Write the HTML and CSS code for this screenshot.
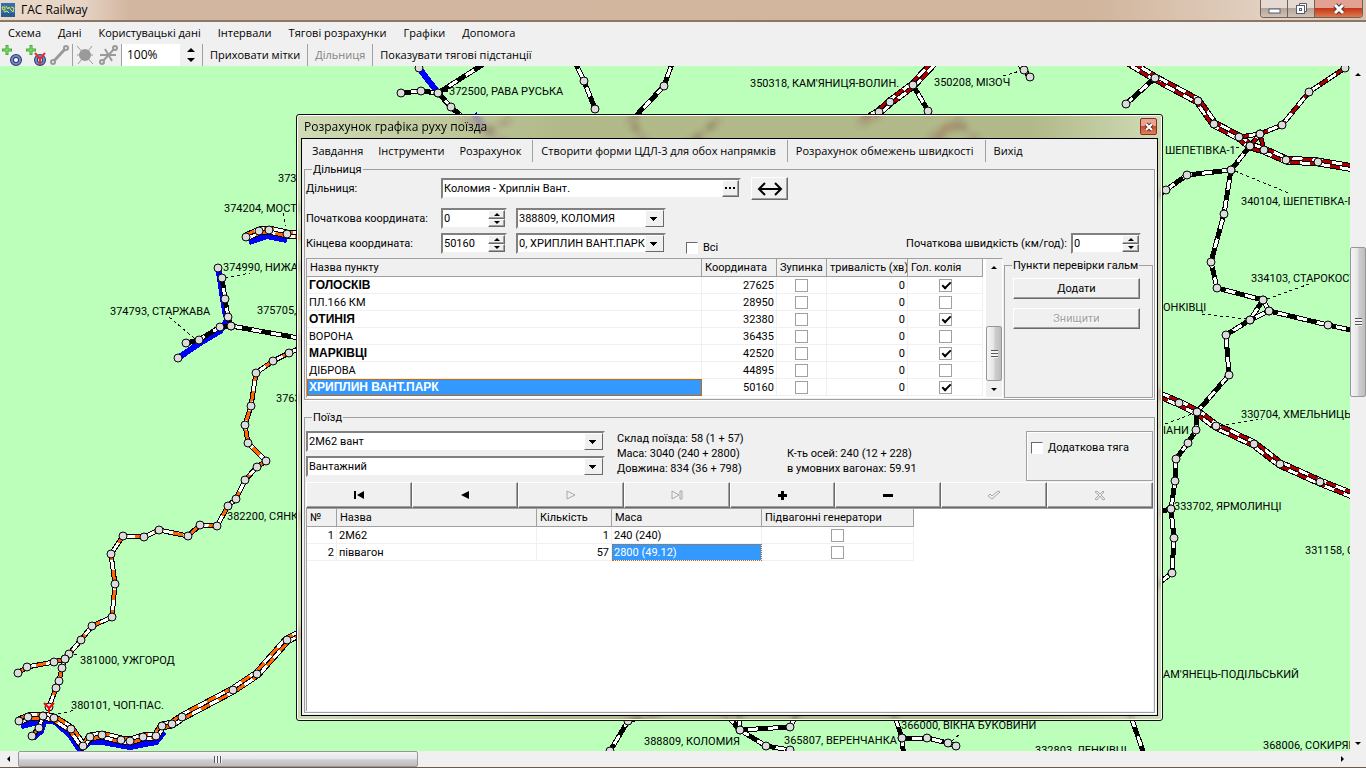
FILE: index.html
```html
<!DOCTYPE html>
<html lang="uk">
<head>
    <meta charset="UTF-8">
    <meta name="viewport" content="width=device-width, initial-scale=1.0">
    <title>ГАС Railway</title>
    <link rel="stylesheet" href="styles.css">
</head>
<body>
    <header class="titlebar">
        <svg class="app-icon" width="14" height="14" viewBox="0 0 14 14">
            <rect width="14" height="14" fill="#2f6fb4"/>
            <path d="M0 10h14v4H0z" fill="#2a5a94"/>
            <path d="M1 4h3v3H2zM5 3l2 3 1-2 2 3M10 4l3 1-1 4-2-2M3 9l3-1 2 2" fill="none" stroke="#e6e82e"/>
        </svg>
        <h1>ГАС Railway</h1>
        <div class="win-buttons">
            <button class="win-btn" aria-label="Згорнути"><svg width="13" height="16" viewBox="0 0 13 16"><rect x="1" y="8" width="11" height="4" fill="#fff" stroke="#555c70"/></svg></button>
            <button class="win-btn" aria-label="Відновити"><svg width="13" height="16" viewBox="0 0 13 16"><path d="M4.500 2.500h7v8h-2v-6h-5z" fill="#fff" stroke="#555c70"/><rect x="1.500" y="4.500" width="8" height="8" fill="#fff" stroke="#555c70"/><rect x="4.500" y="7.500" width="2" height="2" fill="none" stroke="#555c70"/></svg></button>
            <button class="win-btn win-close" aria-label="Закрити"><svg width="14" height="16" viewBox="0 0 14 16"><path d="M3 4l8 8M11 4l-8 8" stroke="#53353a" stroke-width="5"/><path d="M3 4l8 8M11 4l-8 8" stroke="#fff" stroke-width="3"/></svg></button>
        </div>
    </header>

    <nav class="menu main-menu">
        <a href="#">Схема</a>
        <a href="#">Дані</a>
        <a href="#">Користувацькі дані</a>
        <a href="#">Інтервали</a>
        <a href="#">Тягові розрахунки</a>
        <a href="#">Графіки</a>
        <a href="#">Допомога</a>
    </nav>

    <div class="toolbar">
        <button class="tool" aria-label="Додати пункт">
            <svg width="22" height="22" viewBox="0 0 22 22"><path d="M6 1v10M1 6h10" stroke="#3fae35" stroke-width="3"/><path d="M6 2v8M2 6h8" stroke="#8be37c"/><circle cx="15" cy="16" r="4" fill="#fff" stroke="#26386f" stroke-width="4"/><circle cx="15" cy="16" r="4" fill="none" stroke="#7488c8" stroke-width="2"/></svg>
        </button>
        <button class="tool" aria-label="Додати підстанцію">
            <svg width="22" height="22" viewBox="0 0 22 22"><path d="M6 1v10M1 6h10" stroke="#3fae35" stroke-width="3"/><path d="M6 2v8M2 6h8" stroke="#8be37c"/><circle cx="15" cy="16" r="4" fill="#fff" stroke="#26386f" stroke-width="4"/><circle cx="15" cy="16" r="4" fill="none" stroke="#7488c8" stroke-width="2"/><path d="M10 9l5 6 5-6M15 15v6" fill="none" stroke="#e03030" stroke-width="2"/></svg>
        </button>
        <button class="tool" aria-label="Додати перегін">
            <svg width="22" height="22" viewBox="0 0 22 22"><path d="M4 18L17 4" stroke="#9a9a9a" stroke-width="3"/><circle cx="4" cy="18" r="2" fill="#eee" stroke="#9a9a9a" stroke-width="2"/><circle cx="17" cy="4" r="2" fill="#eee" stroke="#9a9a9a" stroke-width="2"/></svg>
        </button>
        <span class="sep"></span>
        <button class="tool" aria-label="Видалити пункт" disabled>
            <svg width="22" height="22" viewBox="0 0 22 22"><circle cx="11" cy="11" r="6" fill="#9a9a9a"/><path d="M3 2l16 18M18 2L4 20M3 11h16" stroke="#9a9a9a"/></svg>
        </button>
        <button class="tool" aria-label="Видалити перегін" disabled>
            <svg width="22" height="22" viewBox="0 0 22 22"><path d="M4 18L17 4M7 5l7 12M2 11h16" stroke="#9a9a9a" stroke-width="2"/><circle cx="4" cy="18" r="2" fill="#eee" stroke="#9a9a9a" stroke-width="2"/><circle cx="17" cy="4" r="2" fill="#eee" stroke="#9a9a9a" stroke-width="2"/></svg>
        </button>
        <span class="sep"></span>
        <div class="zoom">
            <input type="text" value="100%" aria-label="Масштаб">
            <div class="zoom-arrows">
                <button class="arrow up" aria-label="Збільшити"></button>
                <button class="arrow down" aria-label="Зменшити"></button>
            </div>
        </div>
        <span class="sep"></span>
        <button class="text-tool">Приховати мітки</button>
        <span class="sep"></span>
        <button class="text-tool" disabled>Дільниця</button>
        <span class="sep"></span>
        <button class="text-tool">Показувати тягові підстанції</button>
    </div>

    <main class="workspace">
        <svg class="map" id="map"></svg>
        <div class="scroll vertical">
            <button class="arrow up" aria-label="Вгору"></button>
            <div class="track"><div class="thumb"></div></div>
            <button class="arrow down" aria-label="Вниз"></button>
        </div>
        <div class="scroll horizontal">
            <button class="arrow left" aria-label="Ліворуч"></button>
            <div class="track"><div class="thumb"></div></div>
            <button class="arrow right" aria-label="Праворуч"></button>
        </div>
        <div class="corner"></div>
    </main>

    <section class="dialog" role="dialog" aria-labelledby="dialogTitle">
        <div class="dialog-title">
            <h2 id="dialogTitle">Розрахунок графіка руху поїзда</h2>
            <button class="dialog-close" aria-label="Закрити"><svg width="10" height="10" viewBox="0 0 10 10"><path d="M2 2l6 6M8 2l-6 6" stroke="#5a3434" stroke-width="4"/><path d="M2 2l6 6M8 2l-6 6" stroke="#fff" stroke-width="2"/></svg></button>
        </div>
        <div class="dialog-body">
            <nav class="menu dialog-menu">
                <a href="#">Завдання</a>
                <a href="#">Інструменти</a>
                <a href="#">Розрахунок</a>
                <span class="sep"></span>
                <a href="#">Створити форми ЦДЛ-3 для обох напрямків</a>
                <span class="sep"></span>
                <a href="#">Розрахунок обмежень швидкості</a>
                <span class="sep"></span>
                <a href="#">Вихід</a>
            </nav>

            <fieldset class="section">
                <legend>Дільниця</legend>
                <div class="row row-section">
                    <label for="section">Дільниця:</label>
                    <div class="field wide">
                        <input type="text" id="section" value="Коломия - Хриплін Вант.">
                        <button class="bevel more" aria-label="Вибрати дільницю"><svg width="11" height="3" viewBox="0 0 11 3"><path d="M0 0h2v2H0zM4 0h2v2H4zM8 0h2v2H8z"/></svg></button>
                    </div>
                    <button class="bevel swap" aria-label="Змінити напрямок"><svg width="26" height="14" viewBox="0 0 26 14"><path d="M2 7h22M8 1L2 7l6 6M18 1l6 6-6 6" fill="none" stroke="#000" stroke-width="2"/></svg></button>
                </div>
                <div class="row">
                    <label for="startCoord">Початкова координата:</label>
                    <div class="field spin">
                        <input type="number" id="startCoord" value="0">
                        <div class="spin-buttons"><button class="arrow up" aria-label="Більше"></button><button class="arrow down" aria-label="Менше"></button></div>
                    </div>
                    <div class="field combo station">
                        <select aria-label="Початковий пункт"><option>388809, КОЛОМИЯ</option></select>
                    </div>
                </div>
                <div class="row">
                    <label for="endCoord">Кінцева координата:</label>
                    <div class="field spin">
                        <input type="number" id="endCoord" value="50160">
                        <div class="spin-buttons"><button class="arrow up" aria-label="Більше"></button><button class="arrow down" aria-label="Менше"></button></div>
                    </div>
                    <div class="field combo station">
                        <select aria-label="Кінцевий пункт"><option>0, ХРИПЛИН ВАНТ.ПАРК</option></select>
                    </div>
                    <label class="check all"><input type="checkbox"> Всі</label>
                    <label class="speed-label" for="startSpeed">Початкова швидкість (км/год):</label>
                    <div class="field spin">
                        <input type="number" id="startSpeed" value="0">
                        <div class="spin-buttons"><button class="arrow up" aria-label="Більше"></button><button class="arrow down" aria-label="Менше"></button></div>
                    </div>
                </div>

                <div class="points">
                    <div class="grid-box">
                        <table class="grid">
                            <colgroup><col><col class="w75"><col class="w50"><col class="w81"><col class="w75"></colgroup>
                            <thead>
                                <tr><th>Назва пункту</th><th>Координата</th><th>Зупинка</th><th>тривалість (хв)</th><th>Гол. колія</th></tr>
                            </thead>
                            <tbody id="points"></tbody>
                        </table>
                        <div class="scroll vertical">
                            <button class="arrow up" aria-label="Вгору"></button>
                            <div class="track"><div class="thumb"></div></div>
                            <button class="arrow down" aria-label="Вниз"></button>
                        </div>
                    </div>
                    <fieldset class="brakes">
                        <legend>Пункти перевірки гальм</legend>
                        <button class="bevel">Додати</button>
                        <button class="bevel" disabled>Знищити</button>
                    </fieldset>
                </div>
            </fieldset>

            <fieldset class="train">
                <legend>Поїзд</legend>
                <div class="train-info">
                    <div class="train-selects">
                        <div class="field combo"><select aria-label="Поїзд"><option>2М62 вант</option></select></div>
                        <div class="field combo"><select aria-label="Тип поїзда"><option>Вантажний</option></select></div>
                    </div>
                    <div class="facts">
                        <p>Склад поїзда: 58 (1 + 57)</p>
                        <p>Маса: 3040 (240 + 2800)</p>
                        <p>Довжина: 834 (36 + 798)</p>
                    </div>
                    <div class="facts second">
                        <p>К-ть осей: 240 (12 + 228)</p>
                        <p>в умовних вагонах: 59.91</p>
                    </div>
                    <div class="extra">
                        <label class="check"><input type="checkbox"> Додаткова тяга</label>
                    </div>
                </div>
                <div class="navigator">
                    <button class="bevel" aria-label="Перший"><svg width="12" height="10" viewBox="0 0 12 10"><path d="M1 1h2v8H1zM11 1v8L4 5z"/></svg></button>
                    <button class="bevel" aria-label="Попередній"><svg width="12" height="10" viewBox="0 0 12 10"><path d="M10 1v8L2 5z"/></svg></button>
                    <button class="bevel" aria-label="Наступний" disabled><svg width="12" height="10" viewBox="0 0 12 10"><path d="M2 1v8l8-4z"/></svg></button>
                    <button class="bevel" aria-label="Останній" disabled><svg width="12" height="10" viewBox="0 0 12 10"><path d="M1 1v8l7-4zM9 1h2v8H9z"/></svg></button>
                    <button class="bevel" aria-label="Додати"><svg width="12" height="10" viewBox="0 0 12 10"><path d="M5 1h3v3h3v3H8v3H5V7H2V4h3z"/></svg></button>
                    <button class="bevel" aria-label="Видалити"><svg width="12" height="10" viewBox="0 0 12 10"><path d="M1 4h10v3H1z"/></svg></button>
                    <button class="bevel" aria-label="Зберегти" disabled><svg width="13" height="10" viewBox="0 0 13 10"><path d="M0 6l2-2 2 2 6-5 2 1-8 7z"/></svg></button>
                    <button class="bevel" aria-label="Скасувати" disabled><svg width="12" height="11" viewBox="0 0 12 11"><path d="M1 2l2-1 3 3 3-3 1 1-3 3 4 4-2 1-3-4-3 4-2-1 4-4z"/></svg></button>
                </div>
                <div class="cars-box">
                    <table class="grid cars">
                        <colgroup><col class="w30"><col class="w200"><col class="w75"><col class="w150"><col class="w152"></colgroup>
                        <thead>
                            <tr><th>№</th><th>Назва</th><th>Кількість</th><th>Маса</th><th>Підвагонні генератори</th></tr>
                        </thead>
                        <tbody>
                            <tr><td class="num">1</td><td>2М62</td><td class="num">1</td><td>240 (240)</td><td class="tick"><input type="checkbox" aria-label="Генератор 2М62"></td></tr>
                            <tr><td class="num">2</td><td>піввагон</td><td class="num">57</td><td class="selected dotted">2800 (49.12)</td><td class="tick"><input type="checkbox" aria-label="Генератор піввагон"></td></tr>
                        </tbody>
                    </table>
                </div>
            </fieldset>
        </div>
    </section>

    <script>
        const points = [
            ["ГОЛОСКІВ", 27625, true],
            ["ПЛ.166 КМ", 28950, false],
            ["ОТИНІЯ", 32380, true],
            ["ВОРОНА", 36435, false],
            ["МАРКІВЦІ", 42520, true],
            ["ДІБРОВА", 44895, false],
            ["ХРИПЛИН ВАНТ.ПАРК", 50160, true]
        ];

        document.getElementById("points").innerHTML = points.map(([name, coord, main], i) => `
            <tr>
                <td class="${main ? "main" : ""} ${i === points.length - 1 ? "selected" : ""}">${name}</td>
                <td class="num">${coord}</td>
                <td class="tick"><input type="checkbox" aria-label="Зупинка ${name}"></td>
                <td class="num">0</td>
                <td class="tick"><input type="checkbox" aria-label="Головна колія ${name}" ${main ? "checked" : ""}></td>
            </tr>`).join("");

        // blue siding lines, drawn under the tracks
        const blueLines = [
            [[249,242],[267,236],[287,240]],
            [[218,268],[220,278],[223,299],[226,317]],
            [[228,319],[220,331],[200,343],[178,358]],
            [[21,726],[43,721],[54,721],[70,735],[80,750],[90,742],[102,742],[130,747],[156,742],[164,732]],
            [[33,738],[41,731],[46,716]],
            [[419,68],[438,93]],
            [[474,114],[486,132]]
        ];

        // single tracks: colour, points
        const singles = [
            ["black", [[222,278],[225,299],[228,317],[231,326]]],
            ["black", [[186,343],[199,340],[220,327],[231,326],[310,340]]],
            ["orange", [[310,344],[289,353],[273,361],[256,373],[251,406],[245,425],[248,443],[266,461],[257,467],[245,480],[236,499],[228,506],[217,526],[200,525],[188,536],[159,530],[144,537],[123,536],[111,554],[115,584],[112,617],[92,626],[81,640],[69,654],[65,659],[62,668],[59,681],[56,688],[49,707]]],
            ["orange", [[18,673],[27,667],[54,662],[65,659]]],
            ["orange", [[32,736],[39,728],[43,716]]],
            ["black", [[401,93],[421,91],[438,93],[490,60]]],
            ["black", [[438,93],[451,107],[470,124]]],
            ["black", [[484,130],[505,142]]],
            ["black", [[484,132],[508,121]]],
            ["black", [[574,60],[584,81],[595,109]]],
            ["black", [[674,58],[664,86],[632,120]]],
            ["black", [[632,122],[646,144]]],
            ["black", [[716,122],[692,142]]],
            ["black", [[913,85],[928,111]]],
            ["black", [[958,122],[976,140]]],
            ["black", [[1014,58],[1024,70],[1030,77]]],
            ["black", [[1155,78],[1126,104]]],
            ["red", [[1239,137],[1260,134],[1282,125],[1309,92],[1345,68]]],
            ["red", [[1250,146],[1260,134],[1264,150]]],
            ["black", [[1250,146],[1231,170],[1187,175],[1166,190],[1150,202]]],
            ["black", [[1231,170],[1224,214],[1211,262],[1217,288],[1263,300],[1269,311],[1328,325],[1360,332]]],
            ["black", [[1263,300],[1250,320],[1269,311]]],
            ["black", [[1250,320],[1226,335],[1229,375],[1197,412],[1196,430],[1188,443],[1176,459],[1175,481],[1171,509],[1174,538],[1172,573],[1150,590]]],
            ["black", [[1171,509],[1150,514]]],
            ["black", [[660,712],[628,721],[610,751]]],
            ["black", [[720,708],[740,730],[766,746],[790,750]]],
            ["black", [[739,708],[740,730],[790,727],[800,708]]],
            ["black", [[892,708],[902,738],[904,760]]],
            ["black", [[902,738],[927,738],[948,743],[956,746]]],
            ["black", [[1128,708],[1146,760]]]
        ];

        // double tracks: colour, points
        const doubles = [
            ["orange", [[246,237],[259,231],[269,230],[287,234],[310,236]]],
            ["orange", [[19,721],[28,717],[43,716],[54,718],[71,729],[83,746],[90,737],[102,735],[121,740],[130,741],[143,737],[156,736],[162,726],[172,724],[182,717],[233,690],[257,674],[287,640],[310,628]]],
            ["red", [[940,56],[913,85],[890,102],[879,112],[862,122]]],
            ["red", [[960,122],[932,138]]],
            ["red", [[1115,54],[1155,78],[1198,101],[1214,124],[1239,137],[1250,146],[1264,150],[1286,160],[1318,162],[1360,169]]],
            ["red", [[1150,391],[1179,403],[1197,412],[1216,426],[1254,444],[1280,464],[1320,482],[1360,498]]]
        ];

        const leaders = [
            [283,213,286,226], [225,278,250,273], [169,317,194,338], [68,653,77,655],
            [58,714,76,710], [440,94,450,90], [1003,76,1020,71], [1236,148,1242,147],
            [1235,171,1291,194], [1267,299,1312,283], [1202,314,1247,319], [1160,426,1192,414],
            [1220,426,1262,419], [952,741,961,733]
        ];

        const labels = [
            [449,95,"372500, РАВА РУСЬКА"], [750,87,"350318, КАМ'ЯНИЦЯ-ВОЛИН."], [934,86,"350208, МІЗОЧ"],
            [1165,154,"ШЕПЕТІВКА-1"], [1241,205,"340104, ШЕПЕТІВКА-ПОД."], [1251,282,"334103, СТАРОКОСТЯНТИНІВ"],
            [1163,311,"ОНКІВЦІ"], [1241,418,"330704, ХМЕЛЬНИЦЬКИЙ"], [1163,434,"ІАНИ"],
            [1174,510,"333702, ЯРМОЛИНЦІ"], [1305,554,"331158, СЛОБІДКА"], [1163,678,"АМ'ЯНЕЦЬ-ПОДІЛЬСЬКИЙ"],
            [1263,749,"368006, СОКИРЯНИ"], [1035,754,"332803, ЛЕНКІВЦІ"], [901,729,"366000, ВІКНА БУКОВИНИ"],
            [784,744,"365807, ВЕРЕНЧАНКА"], [644,745,"388809, КОЛОМИЯ"], [71,709,"380101, ЧОП-ПАС."],
            [80,664,"381000, УЖГОРОД"], [227,520,"382200, СЯНКИ"], [276,402,"3763"],
            [257,314,"375705, САМБІР"], [110,315,"374793, СТАРЖАВА"], [223,271,"374990, НИЖАНКОВИЧІ"],
            [224,212,"374204, МОСТИСЬКА"], [278,182,"373"]
        ];

        // parallel line at distance d from the given one
        function shift(line, d) {
            return line.map((p, i) => {
                const a = line[Math.max(i - 1, 0)];
                const b = line[Math.min(i + 1, line.length - 1)];
                const len = Math.hypot(b[0] - a[0], b[1] - a[1]);
                return [p[0] - (b[1] - a[1]) / len * d, p[1] + (b[0] - a[0]) / len * d];
            });
        }

        function track(line, color, cls = "") {
            const pts = line.map(p => p.join(",")).join(" ");
            return `<polyline class="rail" points="${pts}"/><polyline class="bed" points="${pts}"/><polyline class="dash ${color} ${cls}" points="${pts}"/>`;
        }

        let svg = "";
        blueLines.forEach(l => svg += `<polyline class="blue" points="${l.join(" ")}"/>`);
        doubles.forEach(([c, l]) => svg += track(shift(l, -2), c) + track(shift(l, 2), c, "second"));
        singles.forEach(([c, l]) => svg += track(l, c));
        leaders.forEach(([x1, y1, x2, y2]) => svg += `<line class="leader" x1="${x1}" y1="${y1}" x2="${x2}" y2="${y2}"/>`);
        [...singles, ...doubles].forEach(([c, l]) => l.forEach(([x, y]) => svg += `<circle class="node" cx="${x}" cy="${y}" r="4"/>`));
        svg += `<circle class="node" cx="218" cy="268" r="4"/><circle class="node" cx="178" cy="358" r="4"/><circle class="node" cx="419" cy="68" r="4"/>`;
        svg += `<path class="substation" d="M44 703l5 5 5-5M49 708v5"/>`;
        labels.forEach(([x, y, t]) => svg += `<text x="${x}" y="${y}">${t}</text>`);
        // map data is in window coordinates, the map starts below the toolbar
        document.getElementById("map").innerHTML = `<g transform="translate(0,-66)">${svg}</g>`;
    </script>
</body>
</html>
```
FILE: styles.css
```css
* {
    box-sizing: border-box;
}
body {
    margin: 0;
    height: 100vh;
    display: flex;
    flex-direction: column;
    overflow: hidden;
    background: #f0f0f0;
    color: #000;
    font-family: Roboto, "Liberation Sans", sans-serif;
    font-size: 11px;
    line-height: 15px;
    border-bottom: 1px solid #6b5a4c;
}
h1, h2, p {
    margin: 0;
    font-weight: normal;
}
button, input, select {
    font: inherit;
    color: inherit;
    margin: 0;
    padding: 0;
    border: none;
    border-radius: 0;
    background: none;
}
button {
    display: flex;
    align-items: center;
    justify-content: center;
}

/* title bar */
.titlebar {
    flex: none;
    height: 22px;
    display: flex;
    align-items: center;
    padding-left: 1px;
    background: linear-gradient(90deg, #ead9cb, #e6d5c6 80px, #d2b69f 130px, #d1b59d 80%, #e4d3c4 94%, #d8c2af);
    border-bottom: 2px solid #8c7665;
}
.titlebar h1 {
    margin-left: 6px;
    flex: 1;
}
.titlebar h1, .menu, .toolbar, .dialog-title h2 {
    font-family: "Open Sans", "Noto Sans", sans-serif;
    font-size: 12px;
    line-height: 16px;
}
.menu, .toolbar {
    font-size: 11px;
}
.win-buttons {
    display: flex;
    align-self: flex-start;
    margin-right: 3px;
    border: 1px solid #6d625a;
    border-top: none;
    border-radius: 0 0 4px 4px;
    overflow: hidden;
}
.win-btn {
    width: 27px;
    height: 17px;
    background: linear-gradient(#e4dad1 45%, #b5a496 50%, #cfc2b6);
    border-right: 1px solid #6d625a;
}
.win-close {
    width: 47px;
    border-right: none;
    background: linear-gradient(#e3a192 45%, #c5371d 50%, #dd7a4a);
}

/* menus and toolbar */
.menu {
    display: flex;
    align-items: center;
}
.menu a {
    color: #000;
    text-decoration: none;
    white-space: nowrap;
}
.main-menu {
    flex: none;
    height: 22px;
    padding-left: 8px;
    gap: 17px;
}
.toolbar {
    flex: none;
    height: 22px;
    display: flex;
    align-items: center;
}
.toolbar .tool {
    width: 24px;
    height: 22px;
}
.sep {
    width: 1px;
    height: 22px;
    background: #a0a0a0;
}
.text-tool {
    padding: 0 7px;
    white-space: nowrap;
}
.text-tool:disabled {
    color: #838383;
}
.zoom {
    display: flex;
    height: 22px;
    width: 80px;
}
.zoom input {
    flex: 1;
    min-width: 0;
    padding-left: 5px;
    background: #fff;
    font-size: 12px;
}
.zoom-arrows {
    width: 22px;
    display: flex;
    flex-direction: column;
    align-items: center;
    justify-content: center;
    gap: 6px;
}

/* small triangles */
.arrow::before {
    content: "";
    border: 3px solid transparent;
}
.arrow.up::before {
    border-top: none;
    border-bottom-color: #000;
}
.arrow.down::before {
    border-bottom: none;
    border-top-color: #000;
}
.arrow.left::before {
    border-left: none;
    border-right-color: #000;
}
.arrow.right::before {
    border-right: none;
    border-left-color: #000;
}
.zoom-arrows .arrow::before {
    border-width: 4px;
}

/* map */
.workspace {
    flex: 1;
    min-height: 0;
    display: grid;
    grid-template-columns: 1fr 16px;
    grid-template-rows: 1fr 16px;
}
.map {
    width: 100%;
    height: 100%;
    background: #bbffbb;
    overflow: hidden;
}
.map polyline {
    fill: none;
    shape-rendering: crispEdges;
}
.rail {
    stroke: #000;
    stroke-width: 5;
}
.bed {
    stroke: #fff;
    stroke-width: 3;
}
.dash {
    stroke-width: 3;
    stroke-dasharray: 10 10;
}
.dash.second {
    stroke-dashoffset: 10;
}
.dash.black {
    stroke: #000;
    stroke-width: 5;
}
.dash.orange {
    stroke: #ff6600;
}
.dash.red {
    stroke: #aa0000;
}
.blue {
    stroke: #0000ff;
    stroke-width: 6;
}
.leader {
    stroke: #000;
    stroke-dasharray: 3 3;
    shape-rendering: crispEdges;
}
.node {
    fill: #dcdcdc;
    stroke: #000;
}
.substation {
    fill: none;
    stroke: #ff0000;
    stroke-width: 2;
}

/* scroll bars */
.scroll {
    display: flex;
    background: #f0f0f0;
}
.scroll.vertical {
    flex-direction: column;
}
.scroll .arrow {
    width: 16px;
    height: 16px;
}
.scroll .track {
    flex: 1;
    display: flex;
    min-height: 0;
}
.vertical .track {
    flex-direction: column;
}
.thumb {
    display: flex;
    align-items: center;
    justify-content: center;
    border: 1px solid #979797;
    border-radius: 2px;
    background: linear-gradient(90deg, #f5f5f5, #e4e4e6 50%, #cfcfd1 55%, #bdbdc0);
}
.thumb::before {
    content: "";
    width: 7px;
    height: 8px;
    background: repeating-linear-gradient(#555 0 1px, #f4f4f4 1px 3px);
}
.horizontal .thumb {
    width: 400px;
    margin-left: 2px;
    background: linear-gradient(#f5f5f5, #e4e4e6 50%, #cfcfd1 55%, #bdbdc0);
}
.horizontal .thumb::before {
    width: 8px;
    height: 7px;
    background: repeating-linear-gradient(90deg, #555 0 1px, #f4f4f4 1px 3px);
}
.workspace .vertical .thumb {
    height: 23%;
    margin-top: 165px;
}
.corner {
    background: #f0f0f0;
}

/* dialog window */
.dialog {
    position: absolute;
    left: 296px;
    top: 114px;
    right: 203px;
    bottom: 47px;
    display: flex;
    flex-direction: column;
    padding: 0 4px 4px;
    border: 1px solid #111;
    box-shadow: inset 0 0 0 1px #fff;
    border-radius: 3px;
    background: linear-gradient(90deg, rgba(214, 208, 180, .75), rgba(174, 162, 119, .75) 30%, rgba(174, 162, 119, .75) 85%, rgba(214, 208, 180, .75));
    backdrop-filter: blur(3px);
}
.dialog-title {
    height: 23px;
    display: flex;
    align-items: center;
    justify-content: space-between;
    padding: 0 1px 0 3px;
}
.dialog-close {
    width: 17px;
    height: 17px;
    border: 1px solid #7b3227;
    border-radius: 2px;
    background: linear-gradient(#eba38f 45%, #cc4c2c 50%, #e08058);
}
.dialog-body {
    flex: 1;
    min-height: 0;
    display: flex;
    flex-direction: column;
    padding: 0 2px 2px 2px;
    background: #f0f0f0;
    border: 1px solid #000;
}
.dialog-menu {
    height: 23px;
    padding-left: 8px;
}
.dialog-menu a {
    margin-right: 11px;
}
.dialog-menu a:nth-of-type(1), .dialog-menu a:nth-of-type(2) {
    margin-right: 15px;
}
.dialog-menu .sep {
    margin-right: 8px;
}
fieldset {
    margin: 0;
    min-width: 0;
    padding: 0 1px 1px;
    border: 1px solid #a0a0a0;
    box-shadow: 1px 1px 0 #fff;
}
legend {
    margin-left: 6px;
    padding: 0 1px;
    line-height: 15px;
    white-space: nowrap;
}
.section {
    margin-bottom: 10px;
}

/* form rows */
.row {
    display: flex;
    align-items: center;
    margin-bottom: 4px;
    white-space: nowrap;
}
.row > label:first-child {
    width: 135px;
}
.row-section {
    margin-bottom: 8px;
}
.field {
    display: flex;
    height: 21px;
    background: #fff;
    border: 2px solid;
    border-color: #808080 #f0f0f0 #f0f0f0 #808080;
}
.field input, .field select {
    flex: 1;
    min-width: 0;
    padding-left: 1px;
    outline: none;
    appearance: none;
}
.field input[type=number] {
    appearance: textfield;
}
.field input::-webkit-inner-spin-button {
    display: none;
}
.wide {
    width: 300px;
}
.spin {
    width: 66px;
}
.spin-buttons {
    display: flex;
    flex-direction: column;
    width: 17px;
}
.spin-buttons .arrow {
    flex: 1;
    min-height: 0;
}
.bevel, .spin-buttons .arrow {
    background: #f0f0f0;
    border: 1px solid;
    border-color: #fff #696969 #696969 #fff;
    box-shadow: inset -1px -1px 0 #a0a0a0;
}
.bevel:disabled {
    color: #a0a0a0;
    text-shadow: 1px 1px 0 #fff;
}
.more {
    width: 17px;
}
.swap {
    width: 37px;
    height: 23px;
    margin-left: 10px;
}
.station {
    width: 150px;
    margin-left: 9px;
}
.combo::after {
    content: "";
    width: 17px;
    border: 1px solid;
    border-color: #fff #696969 #696969 #fff;
    background-color: #f0f0f0;
    background-image: linear-gradient(#000, #000), linear-gradient(#000, #000), linear-gradient(#000, #000), linear-gradient(#000, #000);
    background-repeat: no-repeat;
    background-size: 7px 1px, 5px 1px, 3px 1px, 1px 1px;
    background-position: 4px 6px, 5px 7px, 6px 8px, 7px 9px;
}
.check {
    display: flex;
    align-items: center;
    gap: 5px;
}
.all {
    margin: 8px 0 0 20px;
    line-height: 13px;
}
.speed-label {
    margin-left: auto;
    margin-right: 4px;
}
.speed-label + .spin {
    width: 70px;
    margin-right: 12px;
}
input[type=checkbox] {
    appearance: none;
    width: 13px;
    height: 13px;
    flex: none;
    background: #fff;
    border: 1px solid #a0a0a0;
}
.check input[type=checkbox] {
    width: 12px;
    height: 12px;
    border-color: #696969 #fff #fff #696969;
}
input[type=checkbox]:checked::before {
    content: "";
    display: block;
    width: 7px;
    height: 3px;
    margin: 2px 0 0 2px;
    border: solid #000;
    border-width: 0 0 2px 2px;
    transform: rotate(-45deg);
}

/* data grids */
.points {
    display: flex;
    align-items: flex-end;
    gap: 1px;
}
.grid-box {
    flex: 1;
    display: flex;
    justify-content: space-between;
    height: 140px;
    background: #fff;
    border: 1px solid #a0a0a0;
    border-right-color: #fff;
    border-bottom-color: #fff;
}
.grid {
    table-layout: fixed;
    border-collapse: separate;
    border-spacing: 0;
    align-self: flex-start;
}
.grid-box .grid {
    width: calc(100% - 19px);
}
.cars {
    width: 607px;
}
.grid th, .grid td {
    height: 17px;
    padding: 0 2px;
    line-height: 15px;
    text-align: left;
    font-weight: normal;
    white-space: nowrap;
    overflow: hidden;
    border-right: 1px solid #f0f0f0;
    border-bottom: 1px solid #f0f0f0;
}
.grid th {
    padding: 0 0 0 3px;
    background: #f0f0f0;
    border-color: #a0a0a0;
    height: 18px;
}
.grid .num {
    text-align: right;
}
.grid .tick {
    padding: 0;
    text-align: center;
    line-height: 0;
}
.grid .main {
    font-family: "Liberation Sans", sans-serif;
    font-size: 12px;
    font-weight: bold;
}
.grid .selected {
    background: #3399ff;
    color: #fff;
    outline: 1px solid #cc6600;
    outline-offset: -1px;
}
.grid .selected.dotted {
    outline-style: dotted;
}
.w30 { width: 30px; }
.w50 { width: 50px; }
.w75 { width: 75px; }
.w81 { width: 81px; }
.w150 { width: 150px; }
.w152 { width: 152px; }
.w200 { width: 200px; }
.grid-box .thumb {
    height: 55px;
    margin-top: auto;
}
.brakes {
    width: 149px;
    height: 140px;
    padding: 5px 12px 0 8px;
}
.brakes legend {
    margin-left: -1px;
}
.brakes .bevel {
    width: 100%;
    height: 21px;
    margin-bottom: 9px;
}

/* train */
.train {
    flex: 1;
    display: flex;
    flex-direction: column;
}
.train-info {
    display: flex;
    margin: 6px 0 1px;
}
.train-selects {
    display: flex;
    flex-direction: column;
    gap: 4px;
    width: 299px;
}
.facts {
    width: 170px;
    margin-left: 12px;
}
.second.facts {
    margin-left: 0;
    padding-top: 15px;
}
.extra {
    width: 127px;
    height: 50px;
    margin-left: auto;
    padding: 8px 4px;
    border: 1px solid #a0a0a0;
    box-shadow: inset 1px 1px 0 #fff;
}
.navigator {
    display: flex;
}
.navigator .bevel {
    flex: 1;
    height: 26px;
}
.navigator .bevel:disabled svg {
    fill: #f0f0f0;
    stroke: #a8a8a8;
}
.cars-box {
    flex: 1;
    background: #fff;
    border-top: 1px solid #a0a0a0;
    border-left: 1px solid #a0a0a0;
}
```
